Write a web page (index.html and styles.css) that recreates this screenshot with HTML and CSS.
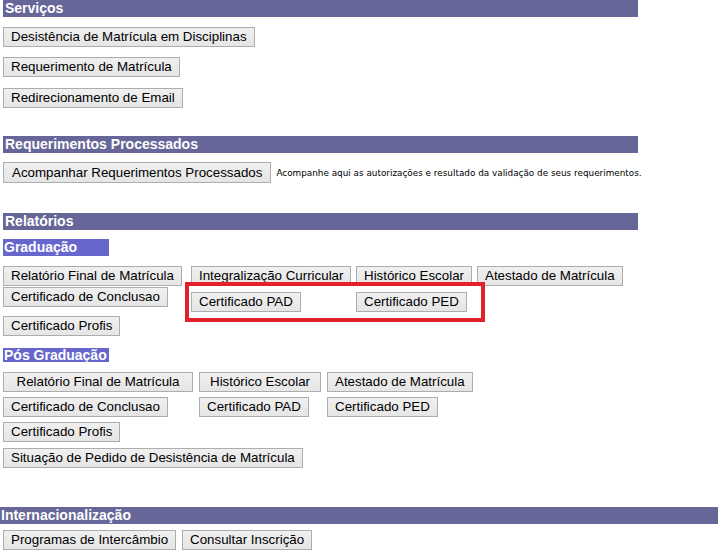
FILE: index.html
```html
<!DOCTYPE html>
<html lang="pt">
<head>
<meta charset="utf-8">
<link rel="stylesheet" href="styles.css">
</head>
<body>
<div class="page">
  <section class="sec sec-serv">
    <div class="bar">Serviços</div>
    <div class="stack">
      <button class="btn">Desistência de Matrícula em Disciplinas</button>
      <button class="btn">Requerimento de Matrícula</button>
      <button class="btn">Redirecionamento de Email</button>
    </div>
  </section>

  <section class="sec sec-req">
    <div class="bar">Requerimentos Processados</div>
    <div class="inline">
      <button class="btn btn-lg">Acompanhar Requerimentos Processados</button>
      <span class="note">Acompanhe aqui as autorizações e resultado da validação de seus requerimentos.</span>
    </div>
  </section>

  <section class="sec sec-rel">
    <div class="bar">Relatórios</div>
    <div class="sub sub-grad">Graduação</div>
    <div class="grid grid-grad">
      <button class="btn">Relatório Final de Matrícula</button>
      <button class="btn">Integralização Curricular</button>
      <button class="btn">Histórico Escolar</button>
      <button class="btn">Atestado de Matrícula</button>
      <button class="btn c-top">Certificado de Conclusao</button>
      <button class="btn c-low">Certificado PAD</button>
      <button class="btn c-low">Certificado PED</button>
      <span></span>
      <button class="btn">Certificado Profis</button>
      <div class="mark"></div>
    </div>
    <div class="sub sub-pos">Pós Graduação</div>
    <div class="grid grid-pos">
      <button class="btn w190">Relatório Final de Matrícula</button>
      <button class="btn w122">Histórico Escolar</button>
      <button class="btn">Atestado de Matrícula</button>
      <button class="btn">Certificado de Conclusao</button>
      <button class="btn">Certificado PAD</button>
      <button class="btn">Certificado PED</button>
      <button class="btn">Certificado Profis</button>
      <span></span><span></span>
      <button class="btn span3">Situação de Pedido de Desistência de Matrícula</button>
    </div>
  </section>

  <section class="sec sec-int">
    <div class="bar bar-full">Internacionalização</div>
    <div class="row">
      <button class="btn">Programas de Intercâmbio</button>
      <button class="btn">Consultar Inscrição</button>
    </div>
  </section>
</div>
</body>
</html>
```
FILE: styles.css
```css
* { box-sizing: border-box; }
html, body { margin: 0; padding: 0; background: #fff; }
body { font-family: "Liberation Sans", Arial, sans-serif; color: #000; }
.page { padding-left: 3px; width: 718px; }

.bar {
  width: 635px;
  height: 17px;
  background: #666699;
  color: #fff;
  font-weight: bold;
  font-size: 14px;
  line-height: 17px;
  padding-left: 2px;
}
.bar-full { width: 718px; margin-left: -3px; padding-left: 1px; }

.btn {
  font-family: "Liberation Sans", Arial, sans-serif;
  font-size: 13.33px;
  color: #000;
  height: 20px;
  padding: 0 7px;
  margin: 0;
  border: 1px solid #adadad;
  border-radius: 0;
  background: linear-gradient(#f0f0f0, #e5e5e5);
  line-height: 18px;
  white-space: nowrap;
  justify-self: start;
  align-self: start;
}
.btn-lg { height: 21px; padding: 0 8px; line-height: 19px; }

.stack { display: flex; flex-direction: column; align-items: flex-start; gap: 10px; margin-top: 10px; }
.sec-serv .stack .btn:nth-child(3) { margin-top: 1px; }

.sec-req { margin-top: 28px; }
.inline { display: flex; align-items: center; gap: 5px; margin-top: 9px; }
.note { font-family: "DejaVu Sans", sans-serif; font-size: 8.85px; color: #000; }

.sec-rel { margin-top: 30px; }
.sub {
  display: block;
  width: 106px;
  background: #6666cc;
  color: #fff;
  font-weight: bold;
  font-size: 14px;
  padding-left: 1px;
}
.sub-grad { margin-top: 9px; height: 17px; line-height: 17px; }
.sub-pos { margin-top: 12px; height: 14px; line-height: 14px; }

.grid { display: grid; position: relative; }
.grid-grad {
  margin-top: 10px;
  grid-template-columns: 188px 165px 121px auto;
  grid-template-rows: 20px 30px 20px;
}
.c-top { margin-top: 1px; }
.c-low { margin-top: 6px; }
.mark {
  position: absolute;
  left: 182px;
  top: 16px;
  width: 300px;
  height: 40px;
  border: 4px solid #e3212b;
  pointer-events: none;
}

.grid-pos {
  margin-top: 10px;
  grid-template-columns: 196px 128px auto;
  grid-template-rows: 20px 20px 20px 20px;
  row-gap: 5px;
}
.grid-pos .btn:last-child { margin-top: 1px; }
.w190 { width: 190px; }
.w122 { width: 122px; }
.span3 { grid-column: 1 / span 3; }

.sec-int { margin-top: 40px; }
.row { display: flex; gap: 6px; margin-top: 6px; }
```
